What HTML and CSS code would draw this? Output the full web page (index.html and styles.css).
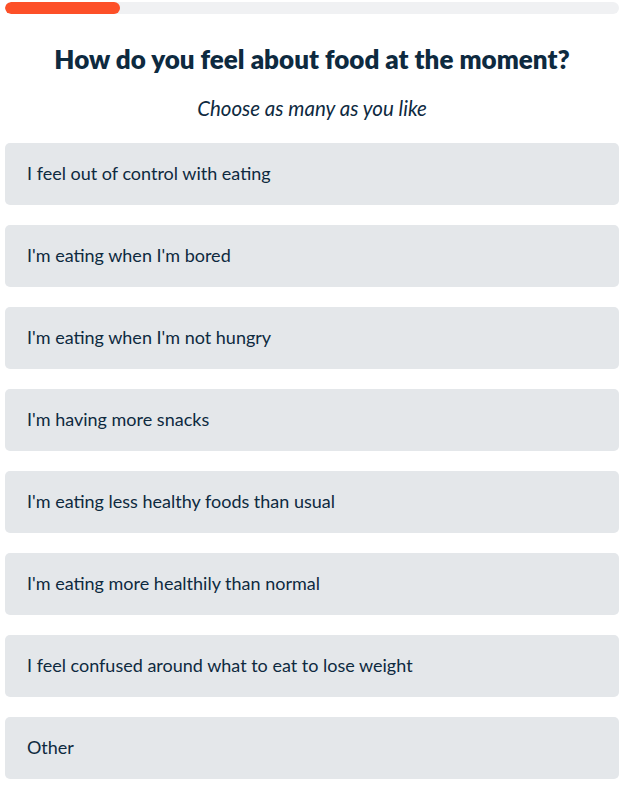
FILE: index.html
```html
<!DOCTYPE html>
<html>
<head>
<meta charset="utf-8">
<link rel="stylesheet" href="styles.css">
</head>
<body>
<div class="page">
  <div class="progress"><div class="progress-fill"></div></div>
  <h1 class="title">How do you feel about food at the moment?</h1>
  <p class="subtitle">Choose as many as you like</p>
  <div class="options">
    <div class="option">I feel out of control with eating</div>
    <div class="option">I'm eating when I'm bored</div>
    <div class="option">I'm eating when I'm not hungry</div>
    <div class="option">I'm having more snacks</div>
    <div class="option">I'm eating less healthy foods than usual</div>
    <div class="option">I'm eating more healthily than normal</div>
    <div class="option">I feel confused around what to eat to lose weight</div>
    <div class="option">Other</div>
  </div>
</div>
</body>
</html>
```
FILE: styles.css
```css
html, body { margin: 0; padding: 0; background: #fff; }
body { font-family: "Lato", "Open Sans", sans-serif; color: #0e2a3f; }
.page { padding: 2px 5px 0; }
.progress { height: 12px; background: #f0f1f3; border-radius: 6px; overflow: hidden; }
.progress-fill { width: 115px; height: 100%; background: #fd5028; border-radius: 6px; }
.title { margin: 28px 0 0; text-align: center; font-size: 26px; font-weight: 800; line-height: 34px; letter-spacing: 0; }
.subtitle { margin: 19px 0 0; text-align: center; font-style: italic; font-size: 20.5px; line-height: 26px; }
.options { margin-top: 22px; display: flex; flex-direction: column; gap: 20px; }
.option { height: 62px; box-sizing: border-box; background: #e4e7ea; border-radius: 5px; padding: 0 22px 3px; display: flex; align-items: center; font-size: 18px; }
```
